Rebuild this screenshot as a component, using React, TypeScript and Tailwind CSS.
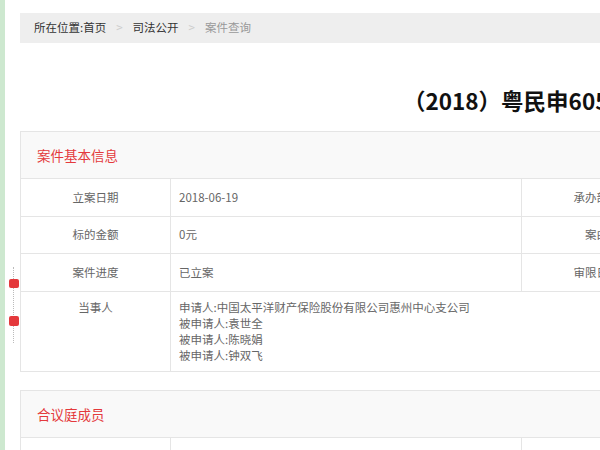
import React from 'react';

const font = { fontFamily: '"Noto Sans CJK SC", "Noto Sans", sans-serif' };

const basicRows = [
  { label: '立案日期', value: '2018-06-19', label2: '承办部门', h: 'h-[38px]' },
  { label: '标的金额', value: '0元', label2: '案由', h: 'h-[37px]' },
  { label: '案件进度', value: '已立案', label2: '审限日期', h: 'h-[38px]' },
];

const parties = [
  '申请人:中国太平洋财产保险股份有限公司惠州中心支公司',
  '被申请人:袁世全',
  '被申请人:陈晓娟',
  '被申请人:钟双飞',
];

const SectionHeader = ({ title }: { title: string }) => (
  <div className="h-[47px] bg-[#f9f9f9] border-b border-[#e5e5e5] flex items-center pl-[16px]">
    <span className="text-[13.5px] text-[#e4393c]">{title}</span>
  </div>
);

const App = () => {
  return (
    <div className="w-[600px] h-[450px] overflow-hidden bg-white flex text-[11.5px]" style={font}>
      {/* left accent strip */}
      <div className="w-[5px] shrink-0 bg-[#cde8cf]" />

      {/* floating side nav */}
      <div className="w-[15px] shrink-0 relative">
        <div className="absolute left-[8px] top-[267px] h-[76px] border-l border-dotted border-[#bbbbbb]" />
        <div className="absolute left-[4px] top-[279px] w-[10px] h-[9px] rounded-[2px] bg-[#e4393c]" />
        <div className="absolute left-[4px] top-[316px] w-[10px] h-[10px] rounded-[2px] bg-[#e4393c]" />
      </div>

      <div className="w-[1160px] shrink-0">
        {/* breadcrumb */}
        <div className="mt-[13px] h-[30px] bg-[#eeeeee] flex items-center pl-[14px] text-[11.5px]">
          <span className="text-[#333333]">所在位置:首页</span>
          <span className="mx-[10px] text-[#cccccc]">&gt;</span>
          <span className="text-[#333333]">司法公开</span>
          <span className="mx-[10px] text-[#cccccc]">&gt;</span>
          <span className="text-[#999999]">案件查询</span>
        </div>

        {/* title */}
        <div className="h-[88px] pt-[42px] pl-[383px]">
          <h1 className="text-[22.5px] leading-[30px] font-bold text-[#111111] whitespace-nowrap">
            （2018）粤民申6053号
          </h1>
        </div>

        {/* basic info */}
        <div className="border border-[#e5e5e5]">
          <SectionHeader title="案件基本信息" />
          <div className="grid grid-cols-[150px_351px_150px_1fr] text-[#666666]">
            {basicRows.map((r) => (
              <React.Fragment key={r.label}>
                <div className={`${r.h} border-r border-b border-[#e5e5e5] flex items-center justify-center`}>
                  {r.label}
                </div>
                <div className={`${r.h} border-r border-b border-[#e5e5e5] flex items-center pl-[8px]`}>
                  {r.value}
                </div>
                <div className={`${r.h} border-r border-b border-[#e5e5e5] flex items-center justify-center`}>
                  {r.label2}
                </div>
                <div className={`${r.h} border-b border-[#e5e5e5]`} />
              </React.Fragment>
            ))}
            <div className="border-r border-[#e5e5e5] pt-[7px] text-center leading-[16px]">当事人</div>
            <div className="col-span-3 pl-[8px] pt-[7px] pb-[8px] leading-[16px]">
              {parties.map((p) => (
                <div key={p}>{p}</div>
              ))}
            </div>
          </div>
        </div>

        {/* panel members */}
        <div className="mt-[18px] border border-[#e5e5e5]">
          <SectionHeader title="合议庭成员" />
          <div className="grid grid-cols-[150px_351px_150px_1fr] text-[#666666]">
            <div className="h-[38px] border-r border-b border-[#e5e5e5] flex items-center justify-center">
              审判长
            </div>
            <div className="h-[38px] border-r border-b border-[#e5e5e5]" />
            <div className="h-[38px] border-r border-b border-[#e5e5e5] flex items-center justify-center">
              审判员
            </div>
            <div className="h-[38px] border-b border-[#e5e5e5]" />
          </div>
        </div>
      </div>
    </div>
  );
};

export default App;
